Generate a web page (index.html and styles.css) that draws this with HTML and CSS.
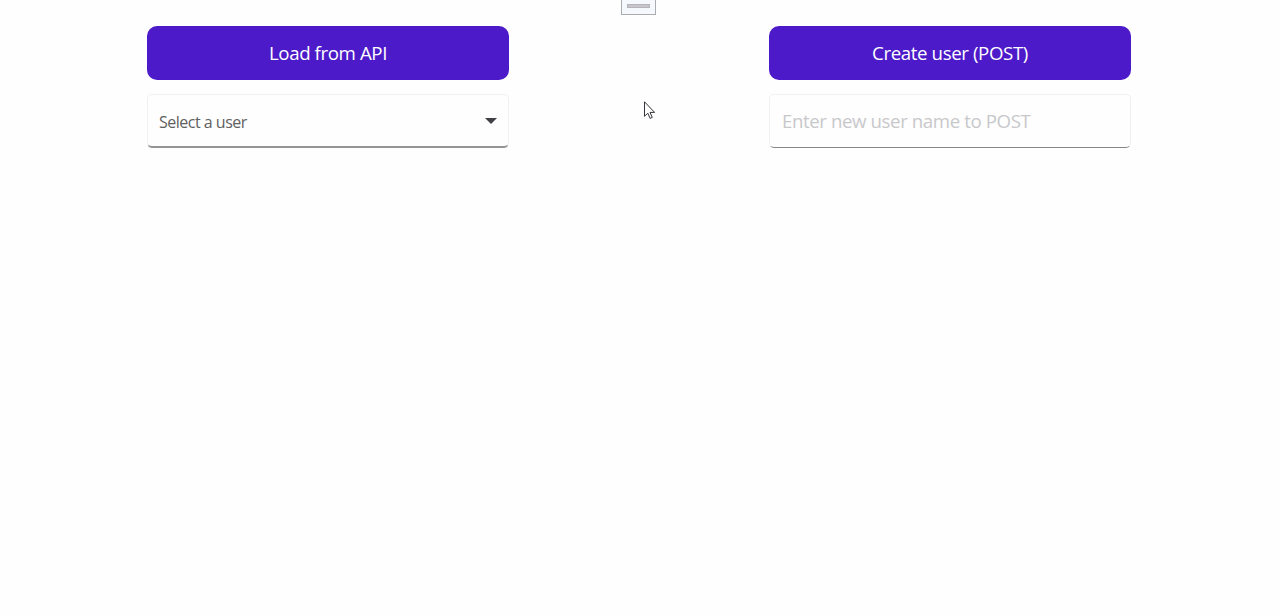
FILE: index.html
```
<!DOCTYPE html>
<html lang="en">
<head>
    <meta charset="UTF-8">
    <meta name="viewport" content="width=device-width, initial-scale=1.0">
    <title>Users API</title>
    <link rel="stylesheet" href="styles.css">
</head>
<body>

    <div class="window-handle"><span></span></div>

    <main class="columns">
        <section class="panel">
            <button type="button" class="btn">Load from API</button>
            <div class="picker" role="button" tabindex="0">
                <span>Select a user</span>
                <svg class="arrow" width="12" height="6" viewBox="0 0 12 6"><path d="M0 0h12L6 6z" fill="#404044"/></svg>
            </div>
        </section>

        <section class="panel">
            <button type="button" class="btn">Create user (POST)</button>
            <input type="text" class="entry" placeholder="Enter new user name to POST">
        </section>
    </main>

    <svg class="cursor" width="12" height="19" viewBox="0 0 12 19">
        <path d="M.5.8v14.5l3.3-3.1 2.3 5.2 2.2-1-2.3-5h4.6z" fill="#fff" stroke="#33333b"/>
    </svg>

</body>
</html>
```

FILE: styles.css
```
* {
    margin: 0;
    padding: 0;
    box-sizing: border-box;
    font-family: 'Open Sans', sans-serif;
}

body {
    background: #fefefe;
    height: 100vh;
    overflow: hidden;
}

.columns {
    display: flex;
    justify-content: space-between;
    padding: 26px 149px 0 147px;
}

.panel {
    display: flex;
    flex-direction: column;
    gap: 14px;
    width: 362px;
}

.btn {
    height: 54px;
    padding-bottom: 2px;
    border: none;
    border-radius: 10px;
    background: #4c1ac9;
    color: white;
    font-size: 18.7px;
    letter-spacing: -0.4px;
}

.picker,
.entry {
    height: 54px;
    border: 1px solid #f0f0f0;
    border-bottom-color: #868686;
    border-radius: 5px;
    background: #fefefe;
}

.picker {
    display: flex;
    align-items: center;
    justify-content: space-between;
    padding: 0 12px 0 11px;
    border-bottom: 2px solid #949494;
    color: #606060;
    font-size: 16px;
    letter-spacing: -0.5px;
}

.picker span {
    padding-top: 2px;
}

.arrow {
    margin-right: -1px;
}

.entry {
    padding: 0 12px 2px;
    font-size: 18.7px;
    letter-spacing: -0.42px;
    outline: none;
}

.entry::placeholder {
    color: #c8c8cb;
}

.window-handle {
    position: absolute;
    top: 0;
    left: 621px;
    width: 35px;
    height: 15px;
    padding: 4px 5px;
    border: 1px solid #aaacaf;
    border-top: none;
    background: #f5f8fc;
}

.window-handle span {
    display: block;
    height: 4px;
    border: 1px solid #b4b4ba;
    background: #c8c6cc;
}

.cursor {
    position: absolute;
    top: 101px;
    left: 644px;
}
```
